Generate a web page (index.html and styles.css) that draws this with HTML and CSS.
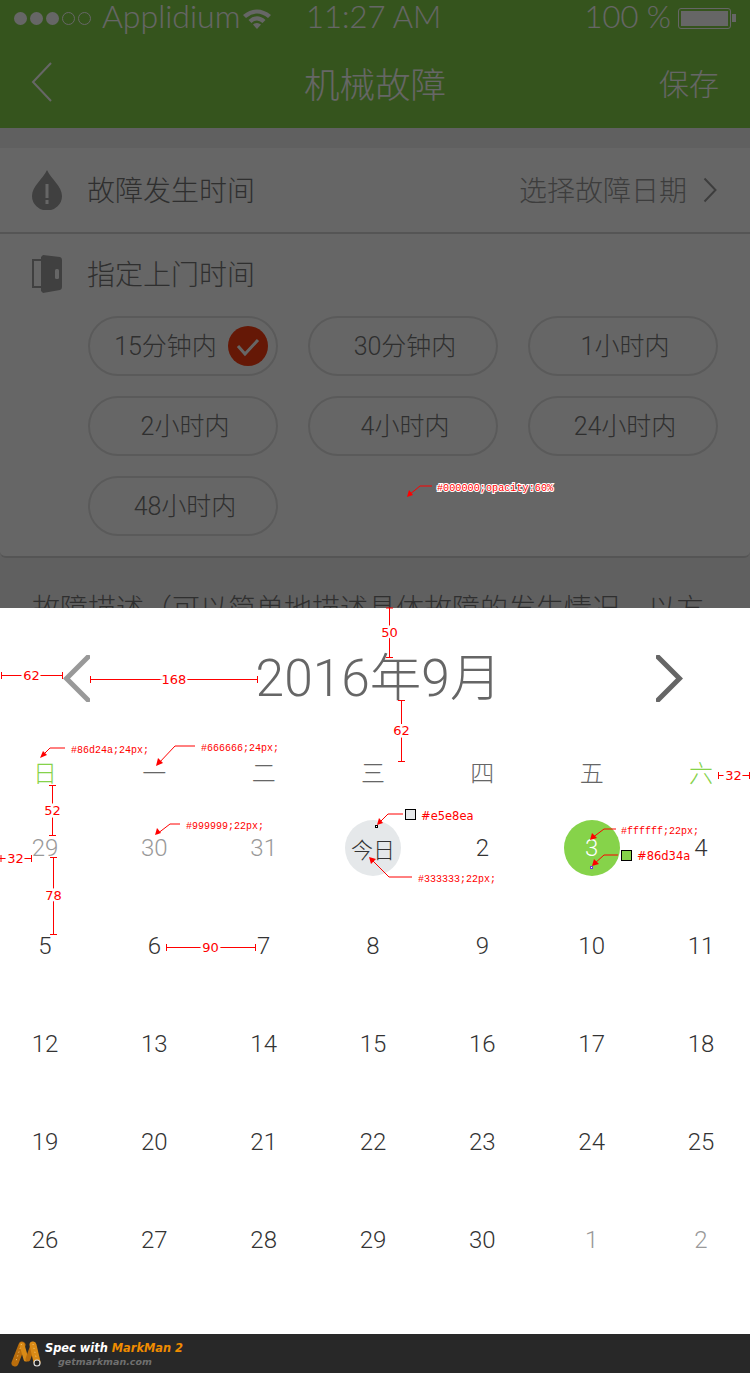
FILE: index.html
```html
<!DOCTYPE html>
<html lang="zh-CN">
<head>
    <meta charset="UTF-8">
    <meta name="viewport" content="width=device-width, initial-scale=1.0">
    <title>机械故障</title>
    <link rel="stylesheet" href="styles.css">
</head>
<body>
<div class="page">
    <div class="screen">
        <div class="status">
            <div class="status-left">
                <span class="dot"></span><span class="dot"></span><span class="dot"></span>
                <span class="dot empty"></span><span class="dot empty"></span>
                <span class="carrier">Applidium</span>
                <svg class="wifi" viewBox="0 0 30 22" width="30" height="22">
                    <path d="M1 8 Q15 -3 29 8 L26 11 Q15 2 4 11 Z" fill="#fff"/>
                    <path d="M6.5 13 Q15 5.500 23.500 13 L20.500 16 Q15 11 9.500 16 Z" fill="#fff"/>
                    <path d="M11 17.500 Q15 14.500 19 17.500 L15 22 Z" fill="#fff"/>
                </svg>
            </div>
            <span class="time">11:27 AM</span>
            <div class="status-right">
                <span class="percent">100 %</span>
                <span class="battery"><span class="battery-fill"></span></span>
                <span class="battery-tip"></span>
            </div>
        </div>
        <div class="navbar">
            <svg class="back" viewBox="0 0 22 40" width="22" height="40">
                <path d="M20 1 L2 20 L20 39" fill="none" stroke="#fff" stroke-width="2"/>
            </svg>
            <span class="nav-title">机械故障</span>
            <span class="nav-save">保存</span>
        </div>
        <div class="card">
            <div class="row row-date">
                <svg class="row-icon" viewBox="0 0 30 40" width="30" height="40">
                    <path d="M15 0 C19 9 30 16 30 26 A15 14.500 0 0 1 0 26 C0 16 11 9 15 0 Z" fill="#a0a0a0"/>
                    <rect x="13.500" y="14" width="3" height="14" fill="#fff"/>
                    <rect x="13.500" y="30" width="3" height="4" fill="#fff"/>
                </svg>
                <span class="row-label">故障发生时间</span>
                <span class="row-value">选择故障日期</span>
                <svg class="row-arrow" viewBox="0 0 14 26" width="14" height="26">
                    <path d="M1.500 1.500 L12.500 13 L1.500 24.500" fill="none" stroke="#999" stroke-width="2"/>
                </svg>
            </div>
            <div class="row-block">
                <div class="row row-visit">
                    <svg class="row-icon" viewBox="0 0 30 38" width="30" height="38">
                        <path d="M9 5 H1 V32 H9" fill="none" stroke="#a0a0a0" stroke-width="2"/>
                        <path d="M9 2 L11 0 L28 2 Q30 2.500 30 5 V32 Q30 34.500 28 35 L11 38 L9 36 Z" fill="#a0a0a0"/>
                        <rect x="23" y="14" width="4" height="10" rx="1.500" fill="#fff"/>
                    </svg>
                    <span class="row-label">指定上门时间</span>
                </div>
                <div class="pills">
                    <div class="pill picked">15分钟内
                        <span class="check">
                            <svg viewBox="0 0 40 40" width="40" height="40">
                                <path d="M10 20 L17 28 L30 14" fill="none" stroke="#fff" stroke-width="3"/>
                            </svg>
                        </span>
                    </div>
                    <div class="pill">30分钟内</div>
                    <div class="pill">1小时内</div>
                    <div class="pill">2小时内</div>
                    <div class="pill">4小时内</div>
                    <div class="pill">24小时内</div>
                    <div class="pill">48小时内</div>
                </div>
            </div>
        </div>
        <p class="describe">故障描述（可以简单地描述具体故障的发生情况，以方</p>
        <div class="scrim"></div>
    </div>

    <div class="calendar">
        <div class="cal-nav">
            <svg viewBox="0 0 27 47" width="27" height="47">
                <path d="M25 2 L3.500 23.500 L25 45" fill="none" stroke="#999" stroke-width="5" stroke-linecap="round"/>
            </svg>
            <span class="cal-title">2016年9月</span>
            <svg viewBox="0 0 27 47" width="27" height="47">
                <path d="M2 2 L23.500 23.500 L2 45" fill="none" stroke="#666" stroke-width="5" stroke-linecap="round"/>
            </svg>
        </div>
        <div class="weekdays">
            <span class="weekend">日</span><span>一</span><span>二</span><span>三</span><span>四</span><span>五</span><span class="weekend">六</span>
        </div>
        <div class="dates">
            <span class="date other">29</span><span class="date other">30</span><span class="date other">31</span>
            <span class="date today">今日</span><span class="date">2</span><span class="date picked-day">3</span><span class="date">4</span>
            <span class="date">5</span><span class="date">6</span><span class="date">7</span><span class="date">8</span><span class="date">9</span><span class="date">10</span><span class="date">11</span>
            <span class="date">12</span><span class="date">13</span><span class="date">14</span><span class="date">15</span><span class="date">16</span><span class="date">17</span><span class="date">18</span>
            <span class="date">19</span><span class="date">20</span><span class="date">21</span><span class="date">22</span><span class="date">23</span><span class="date">24</span><span class="date">25</span>
            <span class="date">26</span><span class="date">27</span><span class="date">28</span><span class="date">29</span><span class="date">30</span><span class="date other">1</span><span class="date other">2</span>
        </div>
    </div>

    <div class="footer">
        <svg class="logo" viewBox="0 0 32 28" width="32" height="28">
            <path d="M4 23 L11 5" stroke="#b96d0c" stroke-width="7" stroke-linecap="round" fill="none"/>
            <path d="M11 5 L15 19" stroke="#d98a16" stroke-width="5" stroke-linecap="round" fill="none"/>
            <path d="M17 19 L22 5" stroke="#b96d0c" stroke-width="5" stroke-linecap="round" fill="none"/>
            <path d="M22 5 L26 22" stroke="#d98a16" stroke-width="7" stroke-linecap="round" fill="none"/>
            <path d="M10.500 4 L5 21M22 4 L25 17" stroke="#f4c878" stroke-width="1" stroke-dasharray="1 3" fill="none"/>
            <circle cx="26" cy="23" r="3" fill="#222" stroke="#ddd" stroke-width="1.200"/>
        </svg>
        <div class="spec">
            <div class="spec-top">Spec with <em>MarkMan 2</em></div>
            <div class="spec-url">getmarkman.com</div>
        </div>
    </div>

    <!-- 标注层 -->
    <svg class="marks" viewBox="0 0 750 1373" width="750" height="1373">
        <g class="dim">
            <path d="M389.500 608V658M386 608H393M386 657.500H393"/>
            <path d="M1.500 675.500H62.500M1.500 672V679M62.500 672V679"/>
            <path d="M90.500 679.500H258M90.500 676V683M257.500 676V683"/>
            <path d="M401.500 700V761M398 700.500H405M398 761.500H405"/>
            <path d="M0 858.500H32M1 855V862M31.500 855V862"/>
            <path d="M52.500 785V836M49 785.500H56M49 835.500H56"/>
            <path d="M53.500 857V934M50 857.500H57M50 934.500H57"/>
            <path d="M166.500 947.500H256M166.500 944V951M255.500 944V951"/>
            <path d="M718.500 775.500H750M718.500 772V779M749.500 772V779"/>
        </g>
        <g class="dim-label">
            <text x="389.500" y="637">50</text>
            <text x="31.500" y="680">62</text>
            <text x="174" y="684">168</text>
            <text x="401.500" y="735">62</text>
            <text x="15.500" y="863">32</text>
            <text x="52.500" y="815">52</text>
            <text x="53.500" y="900">78</text>
            <text x="210.500" y="952">90</text>
            <text x="733.500" y="780">32</text>
        </g>
        <g class="lead">
            <path d="M65 748H50L42 756"/>
            <path d="M195 746H175L158 764"/>
            <path d="M180 824H170L157 834"/>
            <path d="M403 814H388L379 823"/>
            <path d="M412 877H389L371 859"/>
            <path d="M616 829H604L592 838"/>
            <path d="M618 855H604L594 864"/>
            <path d="M432 486H420L409 495"/>
        </g>
        <g class="tip">
            <path d="M40 758L43 751L47 755Z"/>
            <path d="M156 766L158 758L163 763Z"/>
            <path d="M155 835L157 828L161 833Z"/>
            <path d="M377 825L379 818L383 823Z"/>
            <path d="M369 857L376 859L371 864Z"/>
            <path d="M590 840L592 833L597 838Z"/>
            <path d="M592 866L594 859L599 864Z"/>
            <path d="M407 497L409 490L413 495Z"/>
        </g>
        <g class="note">
            <text x="71" y="753">#86d24a;24px;</text>
            <text x="201" y="751">#666666;24px;</text>
            <text x="186" y="829">#999999;22px;</text>
            <text x="418" y="882">#333333;22px;</text>
            <text x="621" y="834">#ffffff;22px;</text>
        </g>
        <text class="note-white" x="437" y="491">#000000;opacity:60%</text>
        <rect class="swatch" x="405.500" y="809.500" width="10" height="10" fill="#e5e8ea"/>
        <text class="swatch-text" x="421" y="820">#e5e8ea</text>
        <rect class="swatch" x="621.500" y="850.500" width="10" height="10" fill="#86d34a"/>
        <text class="swatch-text" x="637" y="860">#86d34a</text>
        <rect class="pin" x="375.500" y="825.500" width="2" height="2"/>
        <rect class="pin pin-blue" x="590.500" y="866.500" width="2" height="2"/>
    </svg>
</div>
</body>
</html>
```

FILE: styles.css
```css
* {
    box-sizing: border-box;
}

body {
    margin: 0;
    font-family: "Roboto", "Noto Sans CJK SC", sans-serif;
    font-weight: 300;
}

.page {
    position: relative;
    width: 750px;
    height: 1373px;
    overflow: hidden;
    background: #fff;
}

/* 上半部分, 被遮罩盖住 */
.screen {
    position: relative;
    height: 608px;
    overflow: hidden;
    background: #f0f0f0;
}

.scrim {
    position: absolute;
    top: 0;
    left: 0;
    right: 0;
    bottom: 0;
    background: rgba(0, 0, 0, 0.6);
}

.status {
    display: flex;
    align-items: center;
    height: 36px;
    padding: 0 14px;
    background: #86d34a;
    color: #fff;
    font-family: "Lato", "Roboto", sans-serif;
    font-size: 31px;
    line-height: 26px;
}

.status-left {
    display: flex;
    align-items: center;
    width: 292px;
}

.dot {
    width: 13px;
    height: 13px;
    margin-right: 3px;
    border-radius: 50%;
    background: #fff;
}

.dot.empty {
    background: none;
    border: 1px solid #fff;
}

.carrier {
    margin: -5px 0 0 8px;
    font-size: 32px;
}

.wifi {
    margin-left: 2px;
}

.time {
    margin-top: -5px;
}

.status-right {
    display: flex;
    align-items: center;
    margin-left: auto;
}

.percent {
    margin: -5px 7px 0 0;
}

.battery {
    width: 53px;
    height: 21px;
    padding: 2px;
    border: 1px solid #fff;
    border-radius: 3px;
}

.battery-fill {
    display: block;
    height: 100%;
    background: #fff;
}

.battery-tip {
    width: 4px;
    height: 8px;
    margin-left: 1px;
    background: #fff;
}

.navbar {
    display: grid;
    grid-template-columns: 1fr auto 1fr;
    align-items: center;
    height: 92px;
    padding: 0 31px;
    background: #86d34a;
    color: #fff;
}

.nav-title {
    font-size: 35.500px;
}

.nav-save {
    justify-self: end;
    font-size: 30px;
}

.card {
    margin-top: 20px;
    background: #fff;
    border-bottom: 2px solid #d4d4d4;
    border-radius: 0 0 6px 6px;
    height: 410px;
}

.row {
    display: flex;
    align-items: center;
    padding: 0 33px 0 32px;
}

.row-date {
    height: 86px;
    border-bottom: 2px solid #d4d4d4;
}

.row-visit {
    padding-top: 21px;
    height: 59px;
}

.row-icon {
    flex: none;
    margin-right: 25px;
}

.row-label {
    margin-top: -2px;
    font-size: 28px;
    color: #777;
}

.row-value {
    margin: -2px 16px 0 auto;
    font-size: 28px;
    color: #999;
}

.pills {
    display: grid;
    grid-template-columns: repeat(3, 190px);
    gap: 20px 30px;
    margin-top: 23px;
    padding-left: 88px;
}

.pill {
    position: relative;
    height: 60px;
    padding-left: 4px;
    line-height: 58px;
    border: 2px solid #e1e1e1;
    border-radius: 30px;
    font-size: 25px;
    color: #777;
    text-align: center;
}

.pill.picked {
    padding: 0 35px 0 0;
}

.check {
    position: absolute;
    top: 8px;
    right: 8px;
    width: 40px;
    height: 40px;
    border-radius: 50%;
    background: #fc3c10;
}

.check svg {
    display: block;
}

.describe {
    margin: 29px 0 0;
    padding-left: 32px;
    white-space: nowrap;
    font-size: 28px;
    color: #777;
}

/* 日历 */
.calendar {
    height: 726px;
    background: #fff;
}

.cal-nav {
    display: flex;
    align-items: center;
    justify-content: space-between;
    padding: 47px 67px 54px 63px;
}

.cal-title {
    margin-left: 11px;
    font-size: 51.500px;
    line-height: 42px;
    color: #666;
}

.weekdays,
.dates {
    display: grid;
    grid-template-columns: repeat(7, 90px);
    justify-content: space-between;
    padding-right: 4px;
    text-align: center;
}

.weekdays {
    font-size: 24px;
    line-height: 36px;
    color: #666;
}

.weekend {
    color: #86d24a;
}

.dates {
    grid-auto-rows: 98px;
    margin-top: 7px;
    font-size: 24px;
    color: #333;
}

.date {
    display: flex;
    align-items: center;
    justify-content: center;
}

.date.other {
    color: #999;
}

.today,
.picked-day {
    width: 56px;
    height: 56px;
    margin: auto;
    border-radius: 50%;
}

.today {
    background: #e5e8ea;
    font-size: 22px;
}

.picked-day {
    background: #86d34a;
    color: #fff;
}

.footer {
    display: flex;
    align-items: center;
    height: 39px;
    padding-left: 11px;
    background: #282828;
}

.spec {
    margin-left: 2px;
    font-family: "DejaVu Sans", sans-serif;
    font-weight: 700;
    font-style: italic;
}

.spec-top {
    font-size: 11.400px;
    line-height: 15px;
    color: #fff;
}

.spec-top em {
    color: #f08c00;
}

.spec-url {
    padding-left: 13px;
    font-size: 9.500px;
    line-height: 11px;
    color: #6f6f6f;
}

/* 标注 */
.marks {
    position: absolute;
    top: 0;
    left: 0;
}

.dim,
.lead {
    fill: none;
    stroke: #f00;
    stroke-width: 1;
}

.tip {
    fill: #f00;
}

.dim-label text {
    font-family: "DejaVu Sans", sans-serif;
    font-size: 13px;
    font-weight: 400;
    fill: #f00;
    text-anchor: middle;
    stroke: #fff;
    stroke-width: 5px;
    paint-order: stroke;
}

.note text {
    font-family: "Liberation Mono", monospace;
    font-size: 10px;
    font-weight: 400;
    fill: #f00;
}

.note-white {
    font-family: "Liberation Mono", monospace;
    font-size: 10.200px;
    font-weight: 400;
    fill: #f00;
    stroke: #fff;
    stroke-width: 2px;
    paint-order: stroke;
}

.swatch {
    stroke: #000;
    stroke-width: 1;
}

.swatch-text {
    font-family: "DejaVu Sans", sans-serif;
    font-size: 11.500px;
    font-weight: 400;
    fill: #f00;
}

.pin {
    fill: #fff;
    stroke: #000;
    stroke-width: 1;
}

.pin-blue {
    stroke: #6a3fd0;
}
```
